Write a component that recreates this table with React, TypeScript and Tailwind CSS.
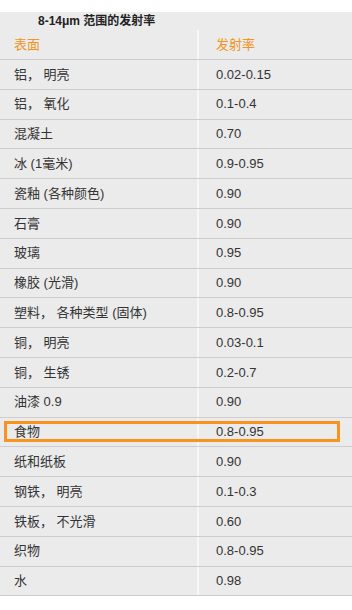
import React from 'react';

const rows: [string, string][] = [
    ['铝， 明亮', '0.02-0.15'],
    ['铝， 氧化', '0.1-0.4'],
    ['混凝土', '0.70'],
    ['冰 (1毫米)', '0.9-0.95'],
    ['瓷釉 (各种颜色)', '0.90'],
    ['石膏', '0.90'],
    ['玻璃', '0.95'],
    ['橡胶 (光滑)', '0.90'],
    ['塑料， 各种类型 (固体)', '0.8-0.95'],
    ['铜， 明亮', '0.03-0.1'],
    ['铜， 生锈', '0.2-0.7'],
    ['油漆 0.9', '0.90'],
    ['食物', '0.8-0.95'],
    ['纸和纸板', '0.90'],
    ['钢铁， 明亮', '0.1-0.3'],
    ['铁板， 不光滑', '0.60'],
    ['织物', '0.8-0.95'],
    ['水', '0.98'],
];

const font = { fontFamily: '"Liberation Sans", "Noto Sans CJK SC", sans-serif' };

export default function App() {
    return (
        <div className="w-[352px] h-[610px] bg-white pt-[12px]" style={font}>
            <div className="bg-[#ebebeb]">
                {/* Title */}
                <div className="h-[18px] pl-[38px] flex items-center text-[12px] font-bold text-[#222]">
                    8-14μm 范围的发射率
                </div>

                {/* Header */}
                <div className="flex h-[30px] border-b border-[#cdcdcd] text-[13px] text-[#f39322]">
                    <div className="w-[197px] pl-[14px] flex items-center">表面</div>
                    <div className="w-[2px] bg-[#f7f7f7]" />
                    <div className="flex-1 pl-[17px] flex items-center">发射率</div>
                </div>

                {/* Rows */}
                {rows.map(([name, value], i) => (
                    <div
                        key={i}
                        className="relative flex h-[29.8px] border-b border-[#cdcdcd] text-[13px] text-[#333]"
                    >
                        <div className="w-[197px] pl-[14px] flex items-center">{name}</div>
                        <div className="w-[2px] bg-[#f7f7f7]" />
                        <div className="flex-1 pl-[17px] flex items-center">{value}</div>
                        {name === '食物' && (
                            <div className="absolute left-[4px] right-[12px] top-[3px] bottom-[4px] border-[3px] border-[#f7931e]" />
                        )}
                    </div>
                ))}
            </div>
        </div>
    );
}
